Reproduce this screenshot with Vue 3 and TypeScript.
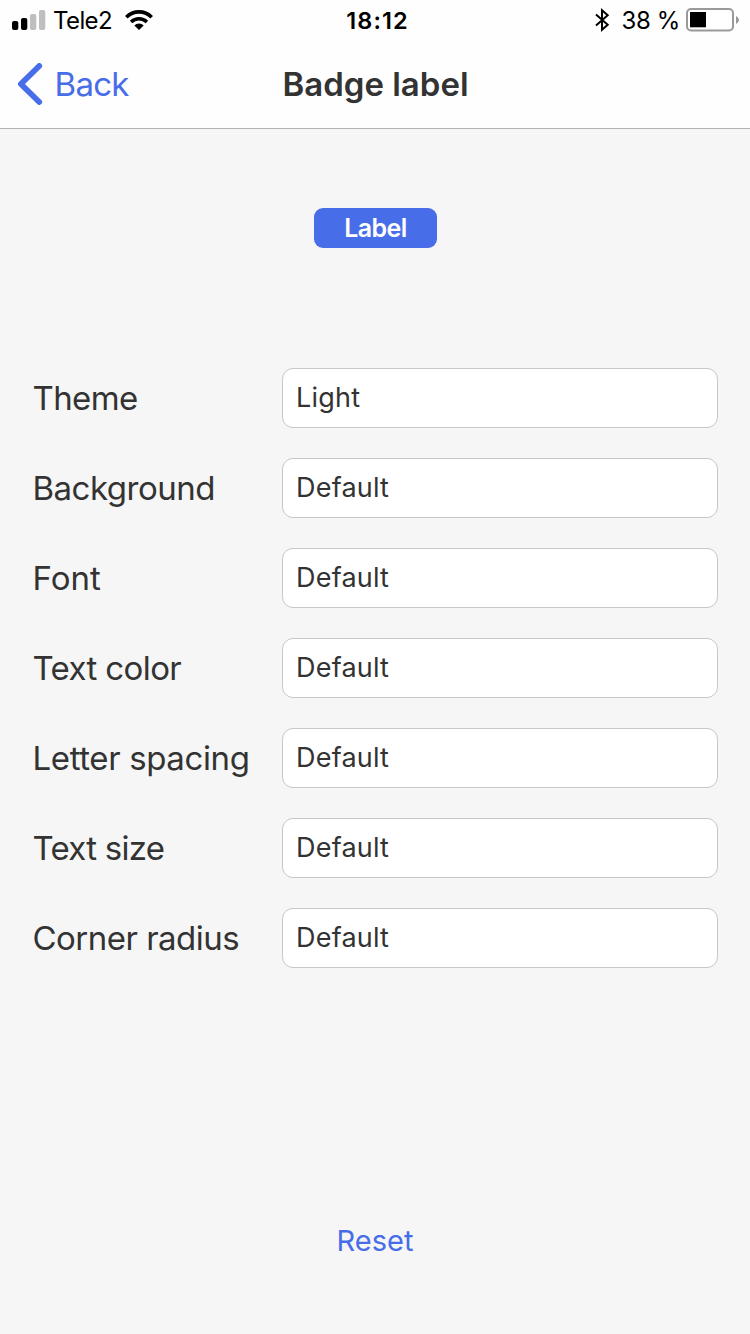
<script setup lang="ts">
interface Setting {
  label: string
  value: string
  tracking: number
}

const settings: Setting[] = [
  { label: 'Theme', value: 'Light', tracking: -0.6 },
  { label: 'Background', value: 'Default', tracking: -0.5 },
  { label: 'Font', value: 'Default', tracking: 0 },
  { label: 'Text color', value: 'Default', tracking: -0.62 },
  { label: 'Letter spacing', value: 'Default', tracking: -0.38 },
  { label: 'Text size', value: 'Default', tracking: -0.72 },
  { label: 'Corner radius', value: 'Default', tracking: -0.52 },
]
</script>

<template>
  <div class="screen">
    <header class="top">
      <div class="status">
        <div class="status-left">
          <svg class="signal" width="34" height="20" viewBox="0 0 34 20">
            <rect x="0" y="11" width="6.3" height="9" rx="2" fill="#000" />
            <rect x="9" y="8" width="6.3" height="12" rx="2" fill="#000" />
            <rect x="18" y="4" width="6.3" height="16" rx="2" fill="#bfbfbf" />
            <rect x="27" y="0" width="6.3" height="20" rx="2" fill="#bfbfbf" />
          </svg>
          <span class="carrier">Tele2</span>
          <svg class="wifi" width="28" height="20" viewBox="0 0 28 20">
            <path d="M1.3 7.2A18 18 0 0 1 26.7 7.2" fill="none" stroke="#000" stroke-width="3.7" />
            <path d="M6.1 12A11.3 11.3 0 0 1 21.9 12" fill="none" stroke="#000" stroke-width="3.5" />
            <path d="M14 20L9.3 15.4A6.7 6.7 0 0 1 18.7 15.4Z" fill="#000" />
          </svg>
        </div>
        <span class="time">18:12</span>
        <div class="status-right">
          <svg class="bluetooth" width="15" height="24" viewBox="0 0 15 24">
            <path d="M1 6.4L12.7 16.8L7 21.7V2.3L12.7 7.2L1 17.6" fill="none" stroke="#000" stroke-width="2" />
          </svg>
          <span class="percent">38 %</span>
          <svg class="battery" width="54" height="24" viewBox="0 0 54 24">
            <rect x="1" y="1" width="46" height="21.5" rx="4" fill="#fff" stroke="#999" stroke-width="2" />
            <rect x="4" y="4" width="16" height="15.3" fill="#000" />
            <path d="M50 8Q53 9.3 53 12T50 16Z" fill="#999" />
          </svg>
        </div>
      </div>
      <nav class="nav">
        <a class="back">
          <svg width="26" height="42" viewBox="0 0 26 42">
            <path d="M22.2 3L3.9 21L22.2 39" fill="none" stroke="#486de8" stroke-width="5.8" stroke-linecap="round" stroke-linejoin="round" />
          </svg>
          <span>Back</span>
        </a>
        <h1 class="title">Badge label</h1>
      </nav>
    </header>
    <main class="content">
      <div class="badge">Label</div>
      <div class="settings">
        <div v-for="item in settings" :key="item.label" class="row">
          <span class="label" :style="{ letterSpacing: item.tracking + 'px' }">{{ item.label }}</span>
          <div class="field">{{ item.value }}</div>
        </div>
      </div>
      <a class="reset">Reset</a>
    </main>
  </div>
</template>

<style>
body {
  margin: 0;
}
</style>

<style scoped>
.screen {
  width: 750px;
  height: 1334px;
  display: flex;
  flex-direction: column;
  overflow: hidden;
  background: #f6f6f6;
  color: #333;
  font-family: Inter, "Liberation Sans", sans-serif;
  white-space: nowrap;
}
.top {
  box-sizing: border-box;
  height: 129px;
  background: #fefefe;
  border-bottom: 1px solid #b2b2b2;
}
.status {
  height: 40px;
  display: grid;
  grid-template-columns: 1fr auto 1fr;
  align-items: center;
  color: #000;
  font-size: 24px;
  line-height: 40px;
}
.status-left,
.status-right {
  display: flex;
  align-items: center;
}
.status-left {
  padding-left: 12px;
}
.carrier {
  margin-left: 7px;
  width: 60px;
  padding-top: 2px;
  line-height: 38px;
  letter-spacing: -0.6px;
}
.wifi {
  margin-left: 12px;
}
.time {
  font-weight: 600;
  font-size: 23.5px;
  letter-spacing: 1.1px;
  padding: 2px 0 0 5px;
  line-height: 38px;
}
.status-right {
  justify-content: flex-end;
  padding-right: 10px;
}
.percent {
  padding-top: 2px;
  line-height: 38px;
  letter-spacing: -0.4px;
  margin: 0 6px 0 12px;
}
.nav {
  height: 88px;
  display: grid;
  grid-template-columns: 1fr auto 1fr;
  align-items: center;
}
.back {
  display: flex;
  align-items: center;
  gap: 11.5px;
  padding-left: 17px;
  color: #486de8;
  font-size: 33px;
  letter-spacing: -0.7px;
}
.title {
  margin: 0 0 0 1px;
  font-size: 33px;
  font-weight: 600;
}
.content {
  flex: 1;
  display: flex;
  flex-direction: column;
  align-items: center;
}
.badge {
  width: 123px;
  height: 40px;
  margin-top: 79px;
  margin-left: 1px;
  border-radius: 9px;
  background: #486de8;
  color: #fff;
  font-size: 25px;
  font-weight: 600;
  line-height: 40px;
  text-align: center;
  letter-spacing: -0.6px;
}
.settings {
  width: 686px;
  margin-top: 120px;
  display: flex;
  flex-direction: column;
  gap: 30px;
}
.row {
  display: grid;
  grid-template-columns: 250px 436px;
  height: 60px;
  align-items: center;
}
.label {
  padding-left: 0.5px;
  font-size: 33px;
}
.field {
  box-sizing: border-box;
  height: 60px;
  padding-left: 13px;
  border: 1px solid #c8c8c8;
  border-radius: 11px;
  background: #fff;
  font-size: 27px;
  line-height: 57px;
  letter-spacing: 0.2px;
}
.reset {
  margin-top: 253px;
  color: #486de8;
  font-size: 29px;
  line-height: 40px;
}
</style>
